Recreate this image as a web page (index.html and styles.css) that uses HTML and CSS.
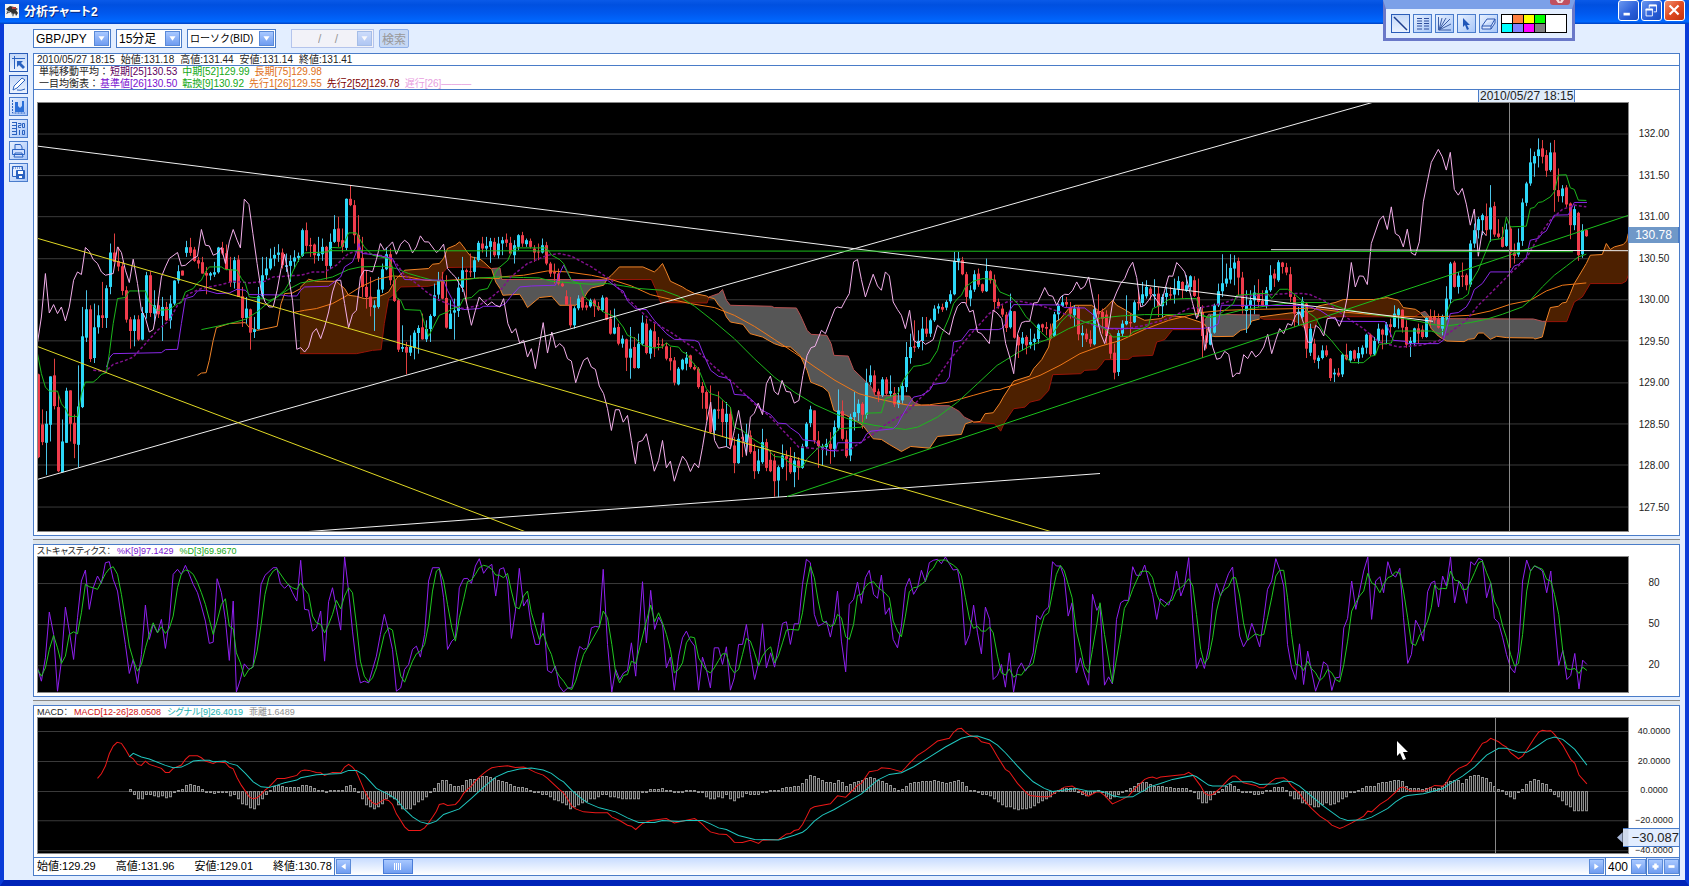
FILE: index.html
```html
<!DOCTYPE html>
<html lang="ja">
<head>
    <meta charset="UTF-8">
    <meta name="viewport" content="width=device-width, initial-scale=1.0">
    <title>分析チャート2</title>
    <link rel="stylesheet" href="styles.css">
</head>
<body>
    <header class="titlebar">
        <svg class="app-icon" viewBox="0 0 14 14"><rect width="14" height="14" fill="#f4f4f4"/><path d="M1 5 5 2l4 1 4 2-2 1 2 3-2 3-1-3-2 3-2-4-5 2 2-3z" fill="#333"/><path d="M7 3h4v2H7z" fill="#b43a3a"/><path d="M1 7h4l-1 2zM6 9l3 1-1 3z" fill="#8a98a0"/></svg>
        <h1>分析チャート2</h1>
        <div class="window-buttons">
            <button class="win-btn" aria-label="最小化"><svg viewBox="0 0 21 21"><path d="M5 13h7v3H5z" fill="#fff"/></svg></button>
            <button class="win-btn" aria-label="元に戻す"><svg viewBox="0 0 21 21" fill="none" stroke="#fff"><path d="M8 8V4.500h8V12h-3" /><path d="M8 5h8" stroke-width="2"/><path d="M4.500 9v7.500h7V9z"/><path d="M4 9.500h8" stroke-width="2"/></svg></button>
            <button class="win-btn win-close" aria-label="閉じる"><svg viewBox="0 0 21 21"><path d="M5 5l10 10M15 5 5 15" stroke="#fff" stroke-width="2.400"/></svg></button>
        </div>
    </header>

    <div class="palette">
        <button class="palette-close" aria-label="パレットを閉じる"><svg viewBox="0 0 20 5"><path d="M6 0h3l1 2 1-2h3l-2 3H8z" fill="#fff" opacity=".8"/></svg></button>
        <button class="tool active" aria-label="直線"><svg viewBox="0 0 17 17"><path d="m2 2 13 13" stroke="#1c3c8c" stroke-width="1.500"/></svg></button>
        <button class="tool" aria-label="フィボナッチ"><svg viewBox="0 0 17 17"><path d="M3 3.500h5M10 3.500h5M3 6h5M10 6h5M3 8.500h5M10 8.500h5M3 11h5M10 11h5M3 14h5M10 14h5" stroke="#2c4c9c"/></svg></button>
        <button class="tool" aria-label="ファン"><svg viewBox="0 0 17 17"><path d="M2.500 2v13H15M3 15 6 3M3 15l7-12M3 15 14 4M3 15l12-6" fill="none" stroke="#3c5ca4"/></svg></button>
        <button class="tool" aria-label="選択"><svg viewBox="0 0 17 17"><path d="M5 3v9l2-2 2 5 2-1-2-4h3z" fill="#1f55b8"/></svg></button>
        <button class="tool" aria-label="消しゴム"><svg viewBox="0 0 17 17"><path d="M2 11 7 4h8l-4 7zM2 11v3h9l4-6V4M11 11v3" fill="#dbe8ff" stroke="#2c56b0"/></svg></button>
        <div class="swatches">
            <button class="swatch white" aria-label="白"></button><button class="swatch orange" aria-label="橙"></button><button class="swatch yellow" aria-label="黄"></button><button class="swatch green" aria-label="緑"></button>
            <button class="swatch cyan" aria-label="水色"></button><button class="swatch violet" aria-label="紫"></button><button class="swatch magenta" aria-label="桃"></button><button class="swatch gray" aria-label="灰"></button>
        </div>
        <div class="current-color"></div>
    </div>

    <div class="window-body">
        <nav class="side-tools">
            <button class="tool active" aria-label="カーソル"><svg viewBox="0 0 17 17" fill="none" stroke="#2a62c0"><path d="M2 4.500h13M4.500 2v13"/><path d="M7 7h6l-2 2 4 4-2 2-4-4-2 2z" fill="#2a62c0" stroke="none"/></svg></button>
            <button class="tool active" aria-label="描画"><svg viewBox="0 0 17 17"><path d="m3 14 1-4 8-8 3 2-8 8z" fill="#fff" stroke="#2a62c0"/><path d="M7 14q4 1 8-1" stroke="#2a62c0" fill="none"/></svg></button>
            <button class="tool" aria-label="指標"><svg viewBox="0 0 17 17"><path d="M2.500 2v13H15" fill="none" stroke="#2a62c0" stroke-dasharray="2 1"/><path d="M5 4h3v4l2 2 2-2V3h2v11H5z" fill="#2a6fd8"/></svg></button>
            <button class="tool" aria-label="目盛"><svg viewBox="0 0 17 17" fill="none" stroke="#2a62c0"><path d="M2 2.500h4M2 5.500h4M2 8.500h4M2 11.500h4M2 14.500h4M6.500 2v13M8 3.500h3v2H8.500v2H11M12.500 3.500h2v4h-2zM9.500 10v5M12.500 10.500h2v4h-2z"/></svg></button>
            <button class="tool" aria-label="印刷"><svg viewBox="0 0 17 17" fill="#cfe0ff" stroke="#2a62c0"><path d="M5 8V2.500h5.500L12 5v3M2.500 7.500h12v5h-12zM5 11h7l1 4H4z"/></svg></button>
            <button class="tool" aria-label="保存"><svg viewBox="0 0 17 17" fill="#e6efff" stroke="#2a62c0"><path d="M2.500 2.500h10v10h-10z"/><path d="M3 4h9" stroke-dasharray="1 1"/><path d="M6.500 6.500h8v8h-8z" fill="#2a62c0"/><path d="M8 7h5v3H8zM9 12h3v2H9z" fill="#fff" stroke="none"/></svg></button>
        </nav>

        <main class="workspace">
            <form class="toolbar">
                <label class="combo pair"><select aria-label="通貨ペア"><option>GBP/JPY</option></select><svg class="arrow" viewBox="0 0 15 15"><path d="M4 5h7l-3.500 5z"/></svg></label>
                <label class="combo period"><select aria-label="足種"><option>15分足</option></select><svg class="arrow" viewBox="0 0 15 15"><path d="M4 5h7l-3.500 5z"/></svg></label>
                <label class="combo kind"><select aria-label="チャート種類"><option>ローソク(BID)</option></select><svg class="arrow" viewBox="0 0 15 15"><path d="M4 5h7l-3.500 5z"/></svg></label>
                <label class="combo date disabled"><input type="text" aria-label="日付" value="/    /" disabled><svg class="arrow" viewBox="0 0 15 15"><path d="M4 5h7l-3.500 5z"/></svg></label>
                <button class="search" type="button" disabled>検索</button>
            </form>

            <div class="charts">
                <section class="panel">
                    <div class="info quote"><span>2010/05/27 18:15</span><span>始値:131.18</span><span>高値:131.44</span><span>安値:131.14</span><span>終値:131.41</span></div>
                    <div class="info legend">
                        <div><span>単純移動平均：</span><span class="c-ma25">短期[25]130.53</span><span class="c-green">中期[52]129.99</span><span class="c-orange">長期[75]129.98</span></div>
                        <div><span>一目均衡表：</span><span class="c-kijun">基準値[26]130.50</span><span class="c-green">転換[9]130.92</span><span class="c-orange">先行1[26]129.55</span><span class="c-span-b">先行2[52]129.78</span><span class="c-chikou">遅行[26]―――</span></div>
                    </div>
                    <div class="date-strip"><span class="date-tag">2010/05/27 18:15</span></div>
                    <div class="plot-row">
                        <div class="plot"><svg id="price" viewBox="38 103 1590 427" preserveAspectRatio="none"></svg></div>
                        <ul class="axis price-axis">
                            <li>132.00</li><li>131.50</li><li>131.00</li><li>130.50</li><li>130.00</li><li>129.50</li><li>129.00</li><li>128.50</li><li>128.00</li><li>127.50</li>
                        </ul>
                        <span class="price-tag">130.78</span>
                    </div>
                </section>

                <div class="splitter"></div>

                <section class="panel">
                    <div class="sub-legend"><span>ストキャスティクス：</span><span class="c-kijun">%K[9]97.1429</span><span class="c-green">%D[3]69.9670</span></div>
                    <div class="plot-row">
                        <div class="plot"><svg id="stoch" viewBox="38 556 1590 135" preserveAspectRatio="none"></svg></div>
                        <ul class="axis stoch-axis"><li>80</li><li>50</li><li>20</li></ul>
                    </div>
                </section>

                <div class="splitter"></div>

                <section class="panel">
                    <div class="sub-legend"><span>MACD：</span><span class="c-macd">MACD[12-26]28.0508</span><span class="c-signal">シグナル[9]26.4019</span><span class="c-osci">乖離1.6489</span></div>
                    <div class="plot-row">
                        <div class="plot">
                            <svg id="macd" viewBox="38 717 1590 135" preserveAspectRatio="none"></svg>
                            <svg class="pointer" viewBox="0 0 11 19"><path d="M0 0v15l3-3 3 7 3-1-3-7h5z" fill="#fff"/></svg>
                        </div>
                        <ul class="axis macd-axis"><li>40.0000</li><li>20.0000</li><li>0.0000</li><li>−20.0000</li><li>−40.0000</li></ul>
                        <div class="level-tag"><svg viewBox="0 0 10 19"><path d="M10 0 0 9.500 10 19z"/></svg><span>−30.087</span></div>
                    </div>
                    <footer class="bottom-bar">
                        <div class="summary"><span>始値:129.29</span><span>高値:131.96</span><span>安値:129.01</span><span>終値:130.78</span></div>
                        <button class="step" aria-label="前へ"><svg viewBox="0 0 15 15"><path d="M10 4v7L5 7.500z"/></svg></button>
                        <input class="scroll" type="range" aria-label="表示位置" min="0" max="1000" value="26">
                        <button class="step" aria-label="次へ"><svg viewBox="0 0 15 15"><path d="M5 4v7l5-3.500z"/></svg></button>
                        <label class="count"><select aria-label="表示本数"><option>400</option></select><svg class="arrow" viewBox="0 0 15 15"><path d="M4 5h7l-3.500 5z"/></svg></label>
                        <button class="step" aria-label="拡大"><svg viewBox="0 0 15 15"><path d="M6 4h3v2h2v3H9v2H6V9H4V6h2z"/></svg></button>
                        <button class="step" aria-label="縮小"><svg viewBox="0 0 15 15"><path d="M4 6h7v3H4z"/></svg></button>
                    </footer>
                </section>
            </div>
        </main>
    </div>

    <script src="chart.js"></script>
</body>
</html>
```
FILE: styles.css
```css
* {
    margin: 0;
    padding: 0;
    box-sizing: border-box;
}

body {
    height: 100vh;
    display: flex;
    flex-direction: column;
    background: #e3eeff;
    color: #222;
    font-family: "Liberation Sans", "Noto Sans CJK JP", sans-serif;
    font-size: 12px;
    overflow: hidden;
}

button, select, input {
    font: inherit;
    color: inherit;
}

svg {
    display: block;
}

.titlebar {
    flex: none;
    height: 24px;
    display: flex;
    align-items: center;
    gap: 5px;
    padding: 0 4px 3px 5px;
    background: linear-gradient(#0a5ae8, #0050e0 20%, #0058ee 55%, #0068ff 90%, #0040c0);
}

.app-icon {
    width: 14px;
    height: 14px;
}

.titlebar h1 {
    flex: 1;
    font-size: 12px;
    color: #fff;
    font-feature-settings: "palt";
    text-shadow: 1px 1px 0 #0a2a80;
}

.window-buttons {
    display: flex;
    gap: 2px;
}

.win-btn {
    width: 21px;
    height: 21px;
    border: 1px solid #fff;
    border-radius: 3px;
    background: linear-gradient(135deg, #6b98f0, #2a5ed8 60%, #1a4cc0);
}

.win-close {
    background: linear-gradient(135deg, #f09070, #e04a20 50%, #c03410);
}

/* floating drawing palette */
.palette {
    position: absolute;
    top: 0;
    right: 114px;
    display: flex;
    gap: 3px;
    padding: 5px;
    background: #e3eeff;
    border: 3px solid #6a78c8;
    border-top: 9px solid #7ba0e8;
}

.palette-close {
    position: absolute;
    top: -9px;
    right: 2px;
    width: 20px;
    height: 5px;
    border: 0;
    border-radius: 0 0 3px 3px;
    background: #c05060;
}

.tool {
    width: 19px;
    height: 19px;
    border: 1px solid #4a7ccc;
    background: linear-gradient(135deg, #e6f0ff, #a8c6f8);
}

.tool.active {
    background: linear-gradient(#c4d8f8, #eaf2ff);
    border-color: #2a5cb8;
}

.swatches {
    display: grid;
    grid-template-columns: repeat(4, 10px);
    grid-template-rows: 1fr 1fr;
    gap: 1px;
    padding: 1px;
    background: #000;
}

.swatch { border: 0; }
.white { background: #fff; }
.orange { background: #ff8040; }
.yellow { background: #ff0; }
.green { background: #0f0; }
.cyan { background: #0ff; }
.violet { background: #8080ff; }
.magenta { background: #f0f; }
.gray { background: #808080; }

.current-color {
    width: 22px;
    margin-left: -4px;
    background: #fff;
    border: 1px solid #000;
}

.window-body {
    flex: 1;
    min-height: 0;
    display: flex;
    border: solid #0a3cd8;
    border-width: 0 4px 6px;
    border-bottom-color: #0024b8;
    padding: 0 5px 4px;
}

.side-tools {
    display: flex;
    flex-direction: column;
    gap: 3px;
    padding-top: 29px;
    width: 24px;
}

.workspace {
    flex: 1;
    min-width: 0;
    display: flex;
    flex-direction: column;
}

.toolbar {
    display: flex;
    gap: 5px;
    padding: 5px 0;
}

.combo {
    display: grid;
    height: 19px;
    background: #fff;
    border: 1px solid #4a7cc8;
}

.combo select, .combo input, .combo .arrow, .count select, .count .arrow {
    grid-area: 1 / 1;
}

.combo select, .combo input, .count select {
    appearance: none;
    width: 100%;
    min-width: 0;
    padding-left: 2px;
    border: 0;
    background: none;
    color: #000;
}

.combo.kind select {
    font-size: 10px;
}

.arrow, .step {
    width: 15px;
    height: 15px;
    border: 1px solid #5a8ad8;
    background: linear-gradient(#a8c8ff, #6f9cf0);
}

.arrow {
    justify-self: end;
    align-self: center;
    margin-right: 1px;
    pointer-events: none;
}

.arrow path, .step path {
    fill: #fff;
}

.pair { width: 78px; }
.period { width: 66px; }
.kind { width: 89px; }
.date { width: 83px; margin-left: 10px; }

.combo.disabled {
    border-color: #b4c4ec;
    background: #f2f2f8;
}

.combo.disabled .arrow {
    opacity: 0.5;
}

.combo.disabled input {
    padding-left: 26px;
    color: #999;
    white-space: pre;
}

.search {
    width: 30px;
    height: 19px;
    border: 1px solid #8fb0e8;
    border-radius: 2px;
    background: #c6d8f4;
    color: #999;
}

.charts {
    flex: 1;
    min-height: 0;
    display: grid;
    grid-template-rows: minmax(0, 482fr) 8px minmax(0, 153fr) 8px minmax(0, 171fr);
}

.panel {
    min-width: 0;
    display: flex;
    flex-direction: column;
    background: #fff;
    border: 1px solid #4a7cc8;
}

.splitter {
    background: linear-gradient(transparent 3px, #888 3px, #888 4px, #dde4ea 4px);
}

.info, .info div, .sub-legend {
    display: flex;
    gap: 6px;
    white-space: nowrap;
}

.info {
    font-size: 10px;
    line-height: 11px;
    padding-left: 3px;
    border-bottom: 1px solid #4a7cc8;
}

.info.legend {
    display: block;
    height: 24px;
    padding-left: 5px;
    line-height: 12px;
}

.info.legend div { gap: 5px; }
.info.legend div:last-child { line-height: 11px; }
.info.legend div span:first-child { margin-right: -4px; }

.sub-legend {
    height: 11px;
    padding-left: 3px;
    font-size: 9px;
    line-height: 12px;
    font-feature-settings: "palt";
}

.c-ma25 { color: #600060; }
.c-green { color: #14a814; }
.c-orange { color: #e07018; }
.c-kijun { color: #7a10d0; }
.c-span-b { color: #800000; }
.c-chikou { color: #e8a0e0; }
.c-macd { color: #d01010; }
.c-signal { color: #18b0b0; }
.c-osci { color: #909090; }

.date-strip {
    height: 12px;
    display: flex;
    justify-content: flex-end;
    padding-right: 104px;
}

.date-tag {
    width: 97px;
    line-height: 12px;
    padding-left: 1px;
    background: #e0ecfa;
    border: solid #4a7cc8;
    border-width: 0 1px;
    white-space: nowrap;
}

.plot-row {
    position: relative;
    flex: 1;
    min-height: 0;
    display: flex;
    padding: 0 0 3px 3px;
}

.plot {
    position: relative;
    flex: 1;
    min-width: 0;
    display: flex;
    background: #000;
    border: 1px solid #888;
}

.plot > svg:first-child {
    flex: 1;
    min-width: 0;
}

.axis {
    width: 50px;
    display: flex;
    flex-direction: column;
    justify-content: space-between;
    align-items: center;
    list-style: none;
    font-size: 10px;
    line-height: 12px;
}

.price-axis { padding-top: 26px; padding-bottom: 18px; }
.stoch-axis { padding-top: 21px; padding-bottom: 22px; }

.macd-axis {
    padding-top: 9px;
    margin-bottom: -2px;
    font-size: 9px;
    line-height: 11px;
}

.price-tag {
    position: absolute;
    top: 29%;
    right: 0;
    width: 51px;
    line-height: 16px;
    text-align: center;
    background: #6f98c8;
    border: solid #4a7cc8;
    border-width: 0 1px;
    color: #fff;
}

.level-tag {
    position: absolute;
    right: 0;
    bottom: 10px;
    width: 62px;
    height: 19px;
    display: flex;
    overflow: hidden;
}

.level-tag svg {
    width: 10px;
    fill: #a8b8d8;
}

.level-tag span {
    flex: 1;
    padding-left: 9px;
    font-size: 13px;
    line-height: 17px;
    background: rgba(224, 236, 255, 0.92);
    border: solid #4a7cc8;
    border-width: 1px 0;
}

.pointer {
    position: absolute;
    left: 85.5%;
    top: 17%;
    width: 11px;
    height: 19px;
}

.bottom-bar {
    flex: none;
    height: 18px;
    display: flex;
    align-items: center;
    gap: 1px;
    border-top: 1px solid #4a7cc8;
    background: linear-gradient(#c8dcff, #fff);
}

.summary {
    width: 301px;
    align-self: stretch;
    display: flex;
    gap: 20px;
    padding-left: 3px;
    background: #fff;
    border-right: 1px solid #4a7cc8;
    font-size: 11px;
    line-height: 17px;
    white-space: nowrap;
    color: #000;
}

.scroll {
    appearance: none;
    flex: 1;
    min-width: 0;
    height: 15px;
    background: none;
}

.scroll::-webkit-slider-thumb {
    appearance: none;
    width: 30px;
    height: 15px;
    border: 1px solid #4a7cd8;
    background: repeating-linear-gradient(90deg, #fff 0 1px, transparent 1px 2px) center / 8px 7px no-repeat, linear-gradient(#a8c8ff, #6f9cf0);
}

.count {
    width: 42px;
    align-self: stretch;
    display: grid;
    background: #fff;
    border: solid #4a7cc8;
    border-width: 0 1px;
}

.count .arrow {
    margin-right: 0;
}

/* chart strokes and fills */
#price *, #stoch *, #macd * {
    vector-effect: non-scaling-stroke;
    fill: none;
}

#price .grid, #stoch .grid, #macd .grid { stroke: #3a3a3a; }
.crosshair { stroke: #888; }
.t-white { stroke: #f0f0f0; }
.t-yellow { stroke: #e0d824; }
.t-green { stroke: #1cc01c; }
#price .cloud-up { fill: #4d2000; }
#price .cloud-down { fill: #565656; }
.span-a { stroke: #f08428; }
.span-b { stroke: #981408; }
.span-b-high { stroke: #b85050; }
.tenkan, .ma52 { stroke: #1cb81c; }
.ma75 { stroke: #f07818; }
.kijun { stroke: #8a28e8; }
.ma25 { stroke: #80108c; stroke-dasharray: 3 2; stroke-width: 1.5; }
.chikou { stroke: #f4b0ec; }
.wick-up { stroke: #4cc4e8; }
.wick-down { stroke: #e04040; }
#price .body-up { fill: #2cd8f8; }
#price .body-down { fill: #f03c4c; }
.k-line { stroke: #9020f0; }
.d-line { stroke: #20c820; }
.macd-line { stroke: #ec1818; }
.signal-line { stroke: #20c8c0; }
#macd .bar { stroke: #909090; fill: #202020; }
```
FILE: chart.js
```js
const NS = 'http://www.w3.org/2000/svg';

// Each tile maps recorded points to chart coordinates: left, top, horizontal units per pixel
// (vertical resolution is always a third of a pixel)
const TILES = {
    A: [0, 90, 2.8],
    B: [500, 220, 2.8],
    C: [1000, 190, 3],
    D: [1310, 120, 3],
    E: [0, 530, 2.8],
    F: [560, 540, 2.8],
    G: [1100, 530, 2.662]
};

const price = document.getElementById('price');
const stoch = document.getElementById('stoch');
const macd = document.getElementById('macd');

function add(svg, tag, cls, attrs) {
    const el = document.createElementNS(NS, tag);
    el.setAttribute('class', cls);
    for (const key in attrs) el.setAttribute(key, attrs[key]);
    svg.appendChild(el);
}

function line(svg, cls, x1, y1, x2, y2) {
    add(svg, 'line', cls, { x1, y1, x2, y2 });
}

function convert(parts) {
    return Object.entries(parts).map(([key, text]) => {
        const [left, top, unit] = TILES[key];
        return text.trim().split(/\s+/).map(p => {
            const [x, y] = p.split(',').map(Number);
            return (left + x / unit).toFixed(1) + ',' + (top + y / 3).toFixed(1);
        }).join(' ');
    }).join(' ');
}

function trace(svg, cls, parts) {
    add(svg, 'polyline', cls, { points: convert(parts) });
}

// Cloud between leading span A and leading span B
function cloud(cls, a, b) {
    const pa = convert(a).split(' ');
    const pb = convert(b).split(' ');
    add(price, 'polygon', cls, { points: pa.concat(pb.slice().reverse()).join(' ') });
    add(price, 'polyline', cls === 'cloud-up' ? 'span-b' : 'span-b-high', { points: pb.join(' ') });
    add(price, 'polyline', 'span-a', { points: pa.join(' ') });
}

// grids
[134, 175.5, 216.5, 258.5, 299.5, 340.5, 382.5, 423.5, 464.5, 506.5].forEach(y => line(price, 'grid', 38, y, 1628, y));
[582.5, 623.5, 664.5].forEach(y => line(stoch, 'grid', 38, y, 1628, y));
[730.5, 760.5, 790.5, 819.5, 849.5].forEach(y => line(macd, 'grid', 38, y, 1628, y));

cloud('cloud-up',
    { A: '840,592 864,567 886,573 942,573 954,585 965,595 976,615 998,618 1020,625 1054,622 1076,612 1088,605 1099,585 1110,565 1133,540 1200,535 1211,522 1230,520 1242,505 1253,475 1275,465 1287,455 1298,470 1309,487 1320,500 1342,505 1354,515 1377,538' },
    { A: '840,790 998,790 1020,785 1043,780 1067,778 1076,700 1088,625 1110,605 1122,590 1200,588 1230,580 1242,545 1253,532 1342,530 1377,535' });
cloud('cloud-down',
    { B: '-23,148 -12,185 0,205 8,225 55,222 66,240 77,262 110,232 145,228 167,255 212,255 234,235 245,215 256,203 290,195 301,175' },
    { B: '-23,145 0,143 5,178 280,178 301,175' });
cloud('cloud-up',
    { B: '301,175 312,165 334,140 400,140 432,155 443,145 455,130 466,155 477,183 511,200 522,208 545,220 578,227 585,232' },
    { B: '301,178 424,178 435,205 450,247 580,248 585,232' });
cloud('cloud-down',
    { B: '585,232 600,235 612,255 625,268 634,290 645,305 680,312 700,340 735,350 768,370 790,378 813,380 840,405 860,450 870,485 904,500 920,515 935,570 970,585 990,597 1016,615 1045,655 1068,657 1090,672 1124,693 1150,678 1203,683 1225,648 1292,642 1303,610 1325,603' },
    { B: '585,230 612,220 623,208 634,240 645,255 760,258 768,262 830,263 841,285 860,330 871,342 915,345 927,370 935,405 975,407 990,448 1016,475 1040,500 1050,525 1147,527 1158,545 1180,555 1258,556 1285,572 1300,590 1325,603' });
cloud('cloud-up',
    { B: '1325,605 1345,603 1358,580 1381,577', C: '0,638 10,620 41,572 89,557 101,535 125,508 146,470 158,400 182,385 206,355 225,345 275,345 300,365 318,352 338,330 350,345 374,358 398,373 434,390 482,385 500,375 554,380 600,395 614,402' },
    { B: '1325,605 1385,610', C: '2,722 14,695 41,655 75,650 90,635 120,628 146,600 158,553 242,550 254,540 290,538 302,525 314,508 386,507 398,498 458,495 470,455 494,448 518,418 600,418 614,405' });
cloud('cloud-down',
    { C: '614,402 635,437 645,439 700,438 722,420 743,415 755,392 779,386' },
    { C: '614,390 626,372 779,374' });
cloud('cloud-up',
    { D: '-151,590 -60,578 10,572 25,557 75,547 100,538 190,538 232,532 265,540 280,562 316,567 332,578' },
    { D: '-151,592 -139,597 -60,597 -40,605 -17,622 15,622 25,592 100,589 310,590 332,580' });
cloud('cloud-down',
    { D: '332,580 352,600 364,625 385,647 397,655 410,662 462,664 475,657 493,655 505,638 520,638 541,657 560,648 590,652 670,653 675,656 697,650 708,605' },
    { D: '332,578 345,573 355,585 364,595 670,596 697,603 708,603' });
cloud('cloud-up',
    { D: '708,603 721,562 745,558 757,548 769,546 781,520 793,490 805,470 829,430 841,405 877,403 889,370 901,388 913,380 940,373 950,362 955,340' },
    { D: '708,604 770,604 781,575 793,545 817,530 829,510 841,490 935,490 948,483 955,465' });
trace(price, 'span-a', { A: '553,856 564,848 577,847 586,810 597,750 606,712 642,700 687,697 698,712 720,720 753,713 776,708 787,640 797,610 819,608 842,595' });

// candles: direction, high, body top, body bottom, low
const candles = [
    ['A', 0, '-850 852 1100 1103|-957 1002 1055 1064|+962 1000 1057 1153|+858 858 1003 1053|-805 855 947 957|-912 950 1142 1145|+987 1053 1145 1145|+892 901 1057 1057|-900 900 1000 1053|-972 997 1060 1103|+825 948 1063 1130|+650 738 950 953|+600 657 742 755|-645 657 806 815|+640 711 803 818|+645 675 711 730|-575 675 683 713|+585 594 683 713|+460 487 590 612|-430 487 515 515|-470 513 529 543|-515 528 602 615|-588 600 688 697|-680 687 722 775|+675 687 722 768|-675 687 748 752|+650 668 748 750|+545 555 668 685|-543 555 668 680|+600 645 670 700|-620 645 672 683|+620 650 677 752|-635 650 690 692|+615 640 690 715|+570 571 640 645|+525 543 571 580|-541 541 556 556|+452 471 488 500|-443 471 488 497|-470 478 512 515|-500 510 520 535|-500 516 550 550|-530 548 556 612|+545 549 556 570|+515 546 553 560|+470 472 546 550|-455 473 490 495|-463 489 537 540|-500 537 577 590|+500 510 577 595|-495 508 620 620|-590 618 683 710|+620 655 683 700|-655 657 727 778|+680 717 725 743|+590 618 716 718|+500 555 618 622|+500 535 555 567|+475 505 535 540|+470 494 505 528|+462 487 494 515|-475 487 525 535|+490 525 530 545|+495 512 527 575|+480 502 514 535|+487 497 503 515|+415 420 497 500|-397 420 467 483|-443 464 468 500|-460 463 495 520|+440 490 497 512|+445 470 492 512|-467 470 527 568|+430 455 527 537|+375 417 455 458|-380 415 455 470|-415 450 470 487|+325 326 473 480|-285 326 345 348|-330 345 435 460|-375 434 505 515|-440 503 590 620|-540 590 620 655|-560 619 650 678|+630 645 652 722|+560 598 650 655|+520 537 598 608|+472 492 537 540|-475 492 570 585|-560 570 632 635|-625 630 778 785|+705 770 775 785|-755 770 787 852|+735 770 787 797|+720 727 773 807|+705 713 728 790|-670 711 747 748|+690 716 747 755|+672 677 716 755|+580 615 677 680|+545 570 613 632|-545 570 625 627|-555 623 712 715|+630 670 716 716|+625 660 667 748|+560 592 662 680|+500 540 592 605|-535 540 545 638|-490 543 546 560|+500 510 545 565|+452 458 510 515|-440 460 475 487|+440 467 475 500|+443 453 470 518|-443 455 495 500|+440 460 495 505'],
    ['B', 116, '+50 60 70 105|-40 58 68 80|-50 68 100 105|+60 75 105 130|+42 45 80 90|-35 45 70 80|+55 60 72 80|-55 62 80 85|-75 85 97 125|-70 94 97 120|+55 75 97 100|-65 75 130 135|-125 130 160 170|-130 155 160 190|-145 160 190 195|-185 190 198 200|-210 228 253 255|-230 253 315 322|+258 264 315 325|+225 235 264 270|-228 232 262 270|-245 255 262 270|+235 240 258 262|-235 240 258 290|-245 258 268 272|+225 232 270 275|-230 232 298 300|-270 295 340 343|+265 322 340 342|-310 320 370 375|+345 355 370 382|-355 357 412 452|+320 385 412 475|-350 380 443 445|+340 370 443 445|+285 307 370 375|-295 310 398 402|+325 330 400 415|-310 333 380 410|-350 370 374 390|-355 372 376 385|-368 378 415 420|-380 413 423 450|-410 420 487 495|+440 445 492 495|+415 418 447 450|+395 412 430 450|-403 405 440 445|-430 440 447 450|-440 445 500 505|-485 497 517 565|-510 515 565 600|-495 567 635 640|+565 567 630 640|-513 567 571 595|-540 565 605 650|+545 580 605 680|-560 580 675 680|-650 675 728 758|+640 655 728 730|-640 650 655 710|+610 640 665 700|-630 645 695 700|-670 692 752 775|+685 720 752 760|+625 665 725 730|-655 665 742 752|-690 718 752 755|-700 720 782 828|+735 740 780 830|+672 705 740 745|-690 707 715 780|-680 712 755 760|+695 720 755 800|-710 720 742 778|+670 678 742 745|+605 610 678 680|+556 567 608 620|-570 570 660 670|-632 660 677 742|+670 678 682 735|+655 670 680 705|-635 670 685 730|+600 620 685 710|+507 570 622 630|-540 572 655 660|-630 657 707 712|+580 590 705 722|+515 575 590 630|+537 550 578 602|-545 550 583 625|+445 487 583 595|+435 465 485 495|-450 465 515 525|-505 513 523 545|+470 477 525 530|-470 477 520 525|+465 512 520 530|-500 518 552 560|+500 540 552 563|+485 497 540 550|+365 410 500 515|+340 380 413 430|-300 378 382 395|+330 362 380 385|+290 325 362 390|-290 325 340 350|+295 300 340 350|+255 265 300 305|+250 258 265 280|-250 260 268 275|+240 245 262 270|+210 222 243 250|+95 122 222 225|+95 115 122 150|-110 120 162 165|-155 162 230 250|+195 210 235 258|+150 162 208 215|-145 160 193 200|-190 192 213 218|+115 152 213 215|-150 153 180 190|-163 178 245 275|-235 245 258 265'],
    ['C', 241, '-345 355 373 380|-365 373 413 425|+310 362 411 415|-362 363 442 445|-435 440 465 503|+425 442 460 480|-435 440 465 492|+415 455 463 475|+430 445 455 480|+400 403 446 460|-400 402 412 425|-395 410 415 435|-400 417 445 450|+365 372 437 440|+340 347 372 390|+315 336 347 350|-320 335 343 350|-335 350 370 385|+345 355 375 410|-345 352 432 450|+405 428 435 470|-415 430 447 455|-420 446 460 470|+345 357 462 465|-312 362 372 410|-355 365 385 430|-360 373 437 460|-430 435 490 505|-460 487 547 567|+420 428 545 557|+390 400 430 440|+315 392 402 405|-370 395 399 435|+330 336 396 398|-300 335 339 360|+275 312 338 345|+270 290 318 325|-290 295 312 330|+267 312 318 350|-290 310 348 380|+312 320 348 380|+290 308 320 345|-290 312 316 330|+265 297 313 340|+258 272 297 315|-273 275 300 325|+255 285 302 305|+255 258 290 300|-258 270 317 320|-265 320 367 380|-345 365 437 503|-415 435 457 475|+375 430 463 465|+340 345 427 430|+280 303 345 350|+192 279 303 320|+220 265 280 290|+192 233 268 280|+195 217 235 285|-202 212 262 315|-245 262 350 370|+300 345 362 428|+300 330 345 403|+285 307 330 372|-267 310 335 350|-300 332 345 350|+290 300 347 355|+225 255 300 305|-237 250 265 290|+210 216 270 275|-215 217 230 250|-218 231 247 255|-230 252 320 335|-310 320 370 410|+350 365 372 405|+320 333 380 385|-335 340 475 503|+400 415 487 497'],
    ['D', 319, '-655 670 718 728|+705 712 722 745|+675 690 713 717|-675 690 705 710|-713 715 773 782|+745 757 762 785|-743 757 765 770|+700 703 762 770|-670 703 717 720|+690 692 720 727|-688 690 715 722|+680 698 714 730|+675 682 702 712|+640 643 682 700|-640 643 702 707|+650 662 702 707|+610 625 662 670|-625 628 643 687|+605 612 645 670|-595 612 620 650|+555 580 620 622|+563 567 585 625|-567 568 622 637|-600 620 673 682|+650 662 670 710|+622 624 667 675|-610 624 640 670|-615 628 650 655|+590 593 650 652|-567 590 600 620|-570 588 600 610|-580 597 622 625|+583 590 625 645|+498 535 597 600|+425 430 537 550|-422 427 500 502|+455 466 500 520|-427 466 470 500|-460 465 495 510|+360 370 493 500|+310 330 370 383|+290 297 330 355|+280 285 300 345|-250 288 330 345|+195 262 328 365|-245 258 343 350|-297 340 350 355|-320 350 380 382|+310 328 377 380|-318 325 397 443|-370 397 407 430|+325 367 403 410|+235 247 362 377|+185 190 248 258|+85 127 190 197|+95 108 130 170|+55 88 108 142|-60 85 110 130|-90 105 152 170|+68 97 150 155|-60 97 210 275|-145 210 228 245|+195 205 228 247|-195 202 253 262|-247 250 315 357|+258 267 315 330|-275 278 405 422|+312 330 402 413|-327 330 348 350']
];

candles.forEach(([key, start, text]) => {
    const top = TILES[key][1];
    text.split('|').forEach((item, n) => {
        const dir = item[0] === '+' ? 'up' : 'down';
        const [high, bodyTop, bodyBottom, low] = item.slice(1).split(' ').map(v => top + v / 3);
        const x = 38.5 + (start + n) * 4;
        line(price, 'wick-' + dir, x, high, x, low);
        add(price, 'rect', 'body-' + dir, { x: x - 1.5, y: bodyTop, width: 3, height: Math.max(1, bodyBottom - bodyTop) });
    });
});

trace(price, 'ma75', {
    A: '820,667 853,660 886,655 931,640 965,620 1009,590 1054,568 1099,557 1144,560 1189,570 1230,572 1286,568 1342,563 1399,565',
    B: '0,170 66,165 133,152 189,155 256,165 312,178 368,197 421,223 477,237 533,250 601,262 656,285 712,318 768,357 824,397 882,440 938,480 1005,520 1057,535 1113,548 1147,555 1203,553 1258,545 1325,525 1381,508',
    C: '0,597 60,577 120,555 180,525 240,490 300,468 362,450 434,417 506,390 560,377 602,367 674,360 779,357 900,355',
    D: '0,563 100,575 208,585 330,590 421,588 481,585 541,572 601,552 661,540 709,512 757,495 829,488'
});
trace(price, 'ma52', {
    A: '564,718 608,708 653,697 687,687 720,665 742,645 776,620 808,597 842,578 898,568 931,560 976,538 1009,530 1076,528 1110,535 1144,550 1177,560 1211,570 1242,572 1286,570 1342,563 1399,560',
    B: '0,170 66,172 110,173 145,183 200,188 256,192 301,190 345,197 390,205 455,210 500,228 545,258 601,305 656,355 712,415 768,470 824,515 882,553 938,580 994,603 1050,615 1135,627 1169,620 1225,590 1281,545 1337,490 1392,435',
    C: '0,520 53,487 100,462 150,445 206,415 254,397 302,383 362,377 434,373 530,373 578,370 626,382 674,372 722,360 779,350 851,340 900,337',
    D: '0,547 48,547 100,565 148,575 208,585 268,593 328,603 364,612 409,617 481,607 529,597 577,582 637,560 661,540 697,500 733,465 769,438 805,410 829,402'
});
trace(price, 'ma25', {
    A: '261,840 295,843 317,822 351,810 373,800 407,760 441,720 474,690 497,645 530,610 564,595 620,583 653,573 698,578 742,573 765,560 808,557 842,555 876,545 909,545 942,525 965,500 976,490 998,483 1043,492 1088,500 1110,520 1133,555 1166,580 1200,610 1230,630 1265,645 1298,655 1342,645 1377,620',
    B: '5,205 30,170 77,130 133,105 167,100 200,108 256,140 312,180 357,235 421,300 477,335 545,385 601,440 656,490 712,550 757,590 801,640 837,680 893,685 938,692 983,685 1039,645 1083,610 1139,575 1203,505 1258,420 1315,345 1370,280 1401,255',
    C: '20,335 60,333 120,345 180,365 240,390 300,412 362,418 434,405 506,385 566,355 614,350 674,338 722,317 779,315 863,310 911,310',
    D: '0,523 50,545 100,585 160,625 208,665 268,680 330,675 385,662 421,635 469,600 505,555 541,520 601,460 649,415 685,350 721,300 757,268 793,255 829,260'
});
trace(price, 'kijun', {
    A: '298,830 308,800 317,790 452,787 463,778 497,777 508,700 519,625 541,618 553,602 575,600 608,610 642,608 664,597 687,600 698,613 787,614 808,617 831,617 842,600 853,590 920,588 942,570 954,560 965,530 987,515 1000,480 1005,460 1014,490 1043,493 1065,497 1099,505 1110,530 1122,550 1133,568 1242,570 1253,600 1265,625 1275,650 1298,658 1342,655 1354,648 1395,648',
    B: '0,258 15,250 33,225 55,200 88,197 155,195 167,160 178,135 190,160 200,180 256,182 301,180 334,207 345,212 357,242 379,265 410,268 432,300 466,340 488,357 545,360 556,365 567,395 590,450 612,468 634,473 645,482 656,522 690,525 712,545 735,570 757,582 779,608 801,610 813,622 837,640 848,658 882,662 893,675 920,690 940,690 945,667 1012,667 1027,640 1039,632 1101,625 1113,612 1124,590 1147,548 1158,530 1180,525 1203,510 1213,492 1247,487 1258,470 1270,365 1292,360 1315,328 1395,328',
    C: '5,415 17,400 29,360 41,343 182,344 194,352 254,353 278,372 302,408 320,414 602,415 640,410 655,400 664,345 900,346',
    D: '0,560 30,570 60,590 90,603 225,604 235,625 250,660 285,663 295,670 385,670 400,660 411,620 421,580 445,577 469,560 481,540 493,508 517,490 541,455 601,455 613,437 625,433 649,412 661,360 685,355 697,340 709,332 733,285 775,284 793,247 831,247'
});
trace(price, 'tenkan', {
    A: '105,790 116,850 127,890 138,902 161,902 172,940 183,955 194,978 217,978 228,910 239,875 261,875 273,865 284,852 298,847 306,790 317,700 329,625 351,622 362,602 407,602 418,635 441,660 474,658 497,640 508,637 519,605 530,600 541,595 553,578 564,570 575,545 586,530 620,530 631,538 664,540 676,565 687,580 698,620 742,625 753,632 776,620 797,600 808,580 819,545 831,520 842,500 853,488 920,485 931,472 954,473 965,455 976,428 998,428 1009,450 1020,470 1043,495 1065,500 1088,505 1099,530 1110,622 1122,630 1133,658 1177,660 1189,700 1200,738 1211,715 1230,675 1253,665 1265,655 1286,650 1298,625 1320,622 1342,600 1365,595 1377,570 1388,545 1399,530',
    B: '0,140 22,120 33,92 44,83 130,83 145,105 167,118 178,130 200,180 212,187 223,190 234,225 245,238 256,245 290,275 323,290 345,320 357,345 379,355 399,375 432,383 455,380 466,367 477,377 500,380 511,395 522,400 533,418 556,447 567,475 578,505 590,520 612,527 645,560 656,620 679,630 701,650 723,665 745,680 768,708 790,710 813,728 837,740 848,738 860,715 893,680 915,675 938,640 949,625 1012,620 1027,578 1068,577 1079,535 1110,522 1117,515 1124,490 1135,470 1158,438 1180,435 1203,427 1225,390 1236,345 1258,290 1270,250 1281,235 1292,225 1303,200 1325,183 1352,175 1381,178 1392,200',
    C: '0,305 29,317 53,340 77,378 101,402 122,425 146,447 158,430 182,395 206,372 230,385 254,395 278,400 302,408 320,420 338,440 386,438 398,425 434,412 446,405 458,355 482,345 506,328 554,325 590,325 602,372 626,382 650,378 674,360 700,340 710,315 779,310 803,310 815,325 839,297 863,297 887,315 905,330 923,365 947,383',
    D: '40,635 64,660 88,690 124,727 160,727 184,707 196,705 208,672 244,668 256,632 364,632 388,640 403,630 409,580 421,550 433,540 457,535 475,522 481,490 505,450 529,390 541,360 577,355 589,290 601,320 649,318 661,265 673,262 685,247 697,245 721,230 733,215 745,165 769,164 781,203 793,208 805,240 829,241'
});
trace(price, 'chikou', {
    A: '105,757 116,680 127,550 138,668 150,643 161,670 172,650 183,692 194,650 206,570 217,545 228,553 239,472 250,483 261,508 273,520 284,545 295,555 317,550 329,470 340,487 351,540 362,577 373,507 385,580 396,660 407,683 418,725 429,718 441,650 452,560 463,530 474,505 497,487 508,527 519,525 541,505 553,498 564,418 575,465 586,467 597,495 608,490 620,472 631,520 642,455 653,418 664,450 673,473 684,327 697,343 708,430 720,520 731,600 742,635 753,650 765,650 776,600 787,535 797,492 808,560 819,630 831,777 842,772 853,785 864,770 875,728 886,715 898,745 909,710 920,665 931,605 942,570 954,570 965,640 976,712 987,672 998,660 1009,560 1020,540 1032,541 1043,545 1054,508 1065,460 1076,480 1088,468 1099,455 1110,492 1122,462 1133,450 1144,460 1155,488 1166,470 1177,437 1189,455 1200,455 1222,487 1230,480 1242,462 1253,535 1265,550 1275,560 1286,580 1298,600 1309,650 1320,705 1331,660 1342,620 1354,635 1365,645 1377,635 1388,645',
    B: '0,260 10,235 22,310 33,338 44,325 55,368 66,360 77,410 88,385 99,445 110,375 121,307 133,398 145,335 156,382 167,370 178,380 189,415 200,422 212,487 223,450 234,420 245,412 256,440 267,447 278,497 290,520 301,565 312,630 323,568 334,568 345,605 357,585 368,660 379,730 387,665 399,660 410,640 421,695 432,752 444,720 455,660 466,742 477,722 488,782 500,740 511,707 522,722 533,753 545,728 556,742 567,680 578,610 590,545 601,660 612,683 634,678 645,685 656,630 668,570 679,640 690,705 701,590 712,578 723,548 735,583 746,490 757,467 768,513 779,523 790,480 801,513 813,515 824,548 837,540 848,465 860,405 871,382 882,378 900,330 911,340 927,295 938,265 945,260 956,263 967,240 978,220 990,125 1001,118 1012,178 1023,230 1034,195 1045,162 1057,197 1068,210 1079,155 1090,167 1101,245 1113,268 1124,285 1135,325 1147,270 1158,360 1169,368 1180,360 1191,372 1203,365 1213,358 1225,315 1236,325 1258,343 1270,290 1281,258 1292,247 1303,247 1315,275 1325,270 1337,335 1348,340 1370,370 1381,270 1392,278',
    C: '5,385 17,460 29,500 41,550 53,430 65,397 77,393 89,393 101,338 113,337 122,318 134,292 146,315 158,318 170,345 182,320 194,312 206,313 218,300 230,275 242,297 254,288 266,260 278,320 290,380 302,430 314,460 326,410 338,335 350,305 362,280 374,265 386,235 398,216 410,262 422,350 434,345 446,330 458,312 470,330 482,347 494,300 506,257 518,258 530,217 542,230 554,245 566,290 578,340 590,385 602,350 614,480 626,410 638,470 650,507 662,503 674,483 686,492 698,560 710,548 719,550 731,493 743,505 755,482 767,500 779,490 791,470 803,432 815,490 827,450 839,415 851,430 863,400 875,405 887,375 899,365 911,400 923,455 935,457 947,405 959,415 971,437',
    D: '52,595 76,592 88,618 100,590 112,530 124,427 136,500 148,467 160,468 172,493 184,370 208,300 220,287 232,328 244,260 256,340 268,348 280,380 292,327 304,398 316,405 328,365 340,245 352,185 364,127 385,88 397,110 409,150 421,97 433,208 445,225 457,205 469,252 481,315 493,267 505,408 517,332 529,347'
});

// hand-drawn trend lines
line(price, 't-white', 37, 146, 1433, 321);
line(price, 't-white', 37, 479, 1374, 102);
line(price, 't-white', 307, 531, 1100, 473);
line(price, 't-yellow', 37, 238, 1051, 531);
line(price, 't-yellow', 37, 346, 525, 531);
line(price, 't-green', 787, 496, 1629, 215);
line(price, 't-green', 328, 250.5, 1573, 251.5);
line(price, 't-white', 1271, 249.5, 1629, 250.5);
line(price, 'crosshair', 1509.5, 102, 1509.5, 531);

trace(stoch, 'k-line', {
    E: '105,410 116,450 127,380 138,243 150,310 161,480 172,390 183,228 194,300 206,385 217,260 228,150 239,117 250,235 261,170 273,135 284,157 295,95 306,92 317,145 329,180 340,260 351,340 362,427 373,385 385,457 396,370 407,222 418,325 429,280 441,305 452,265 463,352 474,270 485,130 497,115 508,130 519,103 530,130 541,160 553,185 564,225 575,270 586,337 597,333 608,143 620,185 631,265 642,388 653,210 662,482 673,445 684,398 697,415 708,408 720,290 731,160 742,133 753,122 765,110 775,110 785,158 797,172 808,160 819,185 831,210 842,88 853,235 864,237 875,300 886,290 898,240 909,390 920,212 931,170 942,230 954,297 965,78 976,180 987,300 998,400 1009,455 1020,450 1032,455 1043,415 1054,375 1065,310 1076,250 1088,300 1099,355 1110,480 1122,470 1133,415 1144,400 1155,355 1166,345 1177,378 1189,310 1200,150 1211,110 1230,110 1242,200 1253,355 1265,330 1275,320 1286,170 1298,143 1309,142 1320,157 1331,105 1342,83 1354,127 1365,110 1377,100 1388,195 1399,115 1410,110 1421,150 1432,322 1443,240 1454,112 1466,225 1477,205 1488,290 1499,340 1510,340 1521,245 1533,418 1544,425 1555,405 1566,465',
    F: '10,452 22,440 33,440 44,365 55,316 66,325 77,320 88,260 99,256 110,258 121,85 133,310 145,452 156,385 167,415 178,395 189,388 200,305 212,405 223,240 231,122 242,305 254,148 265,265 276,228 287,250 298,380 309,348 320,447 332,345 343,290 354,270 365,298 377,315 388,447 399,348 410,385 421,440 432,320 444,320 455,370 466,317 477,447 488,410 500,310 511,310 522,250 533,340 545,415 556,365 567,248 578,380 590,335 601,378 612,310 623,247 634,242 645,310 656,248 668,248 679,130 690,55 701,65 712,220 723,255 735,248 746,240 757,288 768,230 777,150 788,300 800,392 810,190 822,175 833,123 844,187 855,110 866,88 878,160 889,172 900,102 911,220 922,200 933,295 945,320 956,255 967,140 978,112 990,160 1001,140 1012,88 1023,122 1034,65 1045,58 1057,55 1068,68 1079,48 1090,68 1101,87 1113,85 1124,150 1135,312 1147,280 1158,192 1169,275 1180,338 1191,198 1203,235 1213,415 1225,402 1236,370 1247,438 1258,335 1270,452 1281,385 1292,365 1303,390 1315,370 1325,335 1335,223 1345,235 1356,210 1368,198 1379,62 1390,75 1401,75 1412,110 1423,225 1434,185 1446,395 1457,350 1468,395 1480,432 1491,160 1503,208',
    G: '0,220 12,462 23,437 33,458 44,265 55,215 65,208 76,208 87,107 97,133 108,133 119,102 129,148 140,190 151,265 161,203 172,212 183,222 193,190 204,120 215,195 225,165 236,80 247,270 257,412 268,380 278,412 289,350 300,215 310,157 321,195 332,160 342,128 353,108 361,210 372,315 382,347 393,325 404,277 414,308 425,347 436,260 446,175 457,150 468,83 478,115 489,165 499,340 510,410 521,445 531,338 542,460 553,360 563,420 574,480 585,445 595,392 606,402 617,478 627,440 638,438 649,290 659,262 670,150 681,235 691,180 702,120 713,78 723,265 734,150 745,137 755,185 766,92 777,130 787,138 798,112 808,260 819,397 829,370 840,267 851,290 861,330 872,182 882,155 891,150 901,228 912,135 922,165 933,78 944,215 955,150 965,160 976,217 987,92 997,102 1008,82 1018,87 1029,200 1040,155 1050,262 1061,275 1072,320 1082,370 1093,410 1104,425 1114,360 1125,150 1136,87 1146,120 1157,105 1168,112 1178,120 1189,185 1200,120 1210,270 1221,403 1232,358 1243,445 1253,433 1264,367 1275,473 1285,387 1296,400'
});
trace(stoch, 'd-line', {
    E: '105,415 116,435 127,410 138,355 150,313 161,350 172,397 183,375 194,310 206,302 217,308 228,245 239,160 250,167 261,170 273,175 284,152 295,128 306,113 317,107 329,130 340,190 351,265 362,345 373,385 385,420 396,400 407,350 418,310 429,275 441,305 452,287 463,307 474,292 485,255 497,170 508,128 519,117 530,120 541,130 553,155 564,185 575,220 586,265 597,310 608,270 620,220 631,203 642,285 653,293 662,365 673,395 684,437 697,415 708,408 720,360 731,280 742,190 753,140 765,120 775,113 797,147 808,162 819,170 831,175 842,155 853,175 864,190 875,255 886,275 898,280 909,305 920,280 931,250 942,208 954,233 965,195 976,170 987,185 998,280 1009,390 1020,435 1032,453 1043,440 1054,410 1065,360 1076,310 1088,290 1099,297 1110,365 1122,435 1133,453 1144,420 1155,390 1166,368 1177,360 1189,340 1200,280 1211,180 1222,120 1230,113 1242,150 1253,220 1265,290 1275,330 1286,260 1298,205 1309,152 1320,147 1331,130 1342,110 1354,103 1365,106 1377,115 1388,132 1399,133 1410,140 1421,127 1432,180 1443,228 1454,233 1466,195 1477,180 1488,245 1510,325 1521,307 1533,345 1544,370 1555,415 1566,435',
    F: '10,420 22,440 33,445 44,420 66,340 77,320 110,258 121,210 133,230 145,310 156,395 167,425 178,403 189,400 200,360 212,367 223,320 242,240 254,192 265,242 276,215 287,245 298,280 309,325 320,395 332,385 343,365 354,305 365,287 377,290 388,350 399,370 410,388 421,395 432,380 444,358 455,338 466,338 477,378 488,395 500,385 511,340 522,292 533,300 545,335 556,375 567,345 578,328 590,317 601,365 612,342 623,305 634,267 645,265 668,267 679,215 690,135 701,75 712,110 723,180 735,240 746,245 757,256 768,250 777,220 788,230 800,287 810,295 822,250 833,163 844,160 855,137 866,125 878,122 889,138 900,147 911,157 922,170 933,240 945,270 956,287 967,225 978,152 990,140 1001,138 1012,130 1023,120 1034,92 1045,82 1057,58 1079,57 1090,65 1101,72 1113,83 1124,105 1135,170 1147,235 1158,262 1169,255 1180,270 1191,270 1203,258 1213,275 1225,345 1236,395 1247,402 1258,383 1270,408 1281,400 1292,402 1303,385 1325,367 1335,310 1345,265 1356,225 1368,215 1379,155 1390,100 1401,73 1412,90 1423,130 1434,170 1446,270 1457,320 1468,375 1480,395 1491,325 1503,250',
    G: '0,215 12,310 33,455 55,310 65,232 76,210 87,175 97,150 108,122 119,120 129,122 140,140 151,190 161,215 172,227 183,212 193,207 204,178 215,170 225,160 236,143 247,165 257,250 268,355 278,397 289,380 300,320 310,240 321,190 332,175 342,167 353,140 361,140 372,195 382,275 393,328 404,317 414,308 425,313 436,310 446,260 457,200 468,135 478,118 489,118 499,200 510,310 521,400 531,402 542,418 553,390 563,412 574,425 585,448 595,438 606,415 617,425 627,445 638,452 649,400 659,330 670,240 681,215 691,195 702,180 713,127 723,155 734,163 745,185 755,160 766,140 777,135 787,122 798,127 808,180 819,260 829,337 840,343 851,312 861,300 872,270 882,230 891,162 901,175 912,172 922,173 933,120 944,147 955,150 965,175 976,175 987,150 997,125 1008,95 1018,90 1029,125 1040,155 1050,210 1061,235 1072,285 1082,320 1093,370 1104,405 1114,397 1125,310 1136,180 1146,120 1157,104 1168,110 1178,115 1189,145 1200,150 1210,190 1221,250 1232,360 1243,413 1253,415 1264,412 1275,427 1285,408 1296,418'
});
line(stoch, 'crosshair', 1509.5, 555, 1509.5, 692);

// MACD oscillator, first value belongs to bar 23
const oscillator = [
    6, -10, -22, -22, -10, -8, -12, -15, -12, -18, -15, -3, 3, 5, 18, 22, 18, 16, 6, -2, -3, -7, -3, -2, -3, -13, -10, -22, -35, -40, -48, -52, -40, -22, -8,
    4, 16, 18, 16, 12, 12, 12, 12, 18, 18, 14, 8, 4, 4, -4, 3, 4, 3, 2, 14, 18, 10, -2, -22, -38, -46, -52, -45, -35, -20, -16, -20, -38, -50, -52, -52, -40, -30, -25, -16, -4,
    10, 24, 34, 34, 20, 16, 14, 18, 34, 36, 36, 38, 44, 44, 42, 40, 34, 30, 26, 22, 14, 12, 12, 8, 4, -2, -4, -8, -8, -14, -24, -26,
    -32, -40, -50, -46, -38, -34, -30, -22, -20, -14, -8, -10, -14, -16, -18, -20, -20, -22, -20, -20, -3, -2, 6, 6, 6, 10, 4, 3, -4, -4, -2, 3, 4, 4, -2, -4, -14, -22, -20, -16, -18, -10, -20, -26,
    -18, -14, -6, -8, -10, -8, -2, -2, 4, 2, 2, 10, 12, 12, 14, 16, 24, 36, 48, 46, 38, 34, 28, 26, 24, 34, 28, 16, 22, 28, 30, 32, 38, 42, 38, 34, 30, 24, 18, 10, 4, 6, 14, 24, 28, 28,
    30, 30, 30, 34, 30, 28, 24, 26, 30, 34, 28, 14, 4, 3, -3, -8, -10, -12, -20, -30, -38, -45, -46, -52, -54, -52, -52, -48, -42, -32, -26, -20, -15, -6, 4, 8, 10, 10, 8, -2, -8, -12, -8, -2, 4,
    -3, -14, -22, -16, -8, -2, 4, 10, 16, 24, 26, 26, 22, 16, 14, 14, 12, 12, 10, 10, 8, 8, 3, -4, -20, -32, -32, -24, -10, -2, 6, 16, 20, 16, 6, -2, -4, -4, -8, -10, -6, 2, 3, 12, 12, 12, 3,
    -12, -20, -20, -34, -36, -38, -44, -44, -38, -34, -38, -36, -30, -20, -14, -4, -2, 2, 8, 16, 14, 16, 24, 26, 28, 30, 32, 34, 30, 16, 10, 8, 8, 6, 8, 12, 10, 8, 14, 28, 30, 34, 32, 24,
    36, 44, 48, 48, 42, 40, 28, 16, 5, 3, -8, -16, -20, -4, 5, 20, 30, 36, 32, 24, 20, 5, -8, -14, -26, -40, -44, -58, -58, -58, -58
];
oscillator.forEach((value, n) => {
    const height = Math.max(1, Math.round(Math.abs(value) / 3));
    const x = 38.5 + (23 + n) * 4 - 1;
    add(macd, 'rect', 'bar', { x, y: value > 0 ? 790.5 - height : 790.5, width: 2, height });
});

trace(macd, 'macd-line', {
    E: '273,742 284,728 295,705 306,668 317,645 328,634 340,637 351,655 362,675 373,683 385,700 396,703 407,690 418,700 452,712 463,724 474,724 485,712 508,702 519,685 530,674 553,674 564,680 575,690 597,697 608,692 631,695 642,708 653,713 664,740 676,763 687,780 698,797 709,803 720,800 731,790 742,777 753,768 776,742 797,742 808,739 831,733 842,720 853,717 865,718 886,724 898,725 909,733 931,724 954,725 965,708 976,700 987,708 998,722 1009,750 1020,778 1032,802 1043,815 1054,820 1065,812 1076,805 1088,808 1099,820 1110,848 1122,868 1133,887 1144,898 1177,898 1189,890 1200,875 1211,858 1222,840 1230,820 1242,817 1253,823 1275,820 1286,808 1298,787 1309,775 1320,765 1331,750 1342,738 1354,727 1365,718 1377,710 1399,706 1421,704 1443,709 1466,708 1477,712 1499,724 1521,732 1533,742 1566,775',
    F: '10,755 22,775 33,795 44,803 66,812 99,815 133,815 145,827 167,838 189,852 200,855 212,865 231,847 254,838 276,835 298,832 320,845 354,837 377,832 388,840 399,850 410,862 421,872 444,878 466,880 477,890 488,903 511,904 533,897 556,907 567,897 612,895 634,878 645,877 656,868 668,865 679,850 690,827 701,803 712,797 757,788 777,764 800,768 822,745 833,733 844,727 866,692 889,688 900,680 922,682 956,692 967,680 978,667 1001,643 1023,628 1045,610 1057,600 1090,592 1101,575 1113,564 1124,562 1135,573 1147,583 1169,590 1180,602 1203,608 1213,625 1225,647 1247,685 1258,692 1281,727 1303,752 1315,763 1345,767 1368,767 1390,752 1412,738 1434,735 1457,750 1480,765 1503,752',
    G: '0,783 12,793 33,818 55,807 76,795 87,780 97,768 119,745 129,740 140,738 151,742 161,738 225,730 236,724 247,732 257,748 268,765 278,785 289,792 300,790 321,770 342,745 353,735 361,735 382,755 414,763 425,770 436,770 457,750 468,742 489,740 499,748 510,765 531,787 542,805 563,832 585,855 606,870 617,882 638,892 649,887 670,875 691,862 702,855 713,840 723,842 745,820 766,805 787,783 798,770 808,768 819,775 829,780 861,780 891,763 912,765 922,755 933,733 955,712 976,702 987,690 997,673 1018,637 1029,632 1040,622 1061,632 1072,642 1082,648 1093,665 1114,683 1125,675 1136,657 1157,620 1168,603 1178,598 1189,600 1200,599 1210,610 1232,643 1253,685 1264,697 1275,732 1296,758'
});
trace(macd, 'signal-line', {
    E: '362,677 373,667 396,678 418,684 463,703 485,710 508,708 530,697 541,690 564,688 586,688 597,692 631,690 642,697 664,703 687,727 709,752 731,767 753,769 776,762 797,755 831,747 842,740 886,731 954,727 976,718 998,718 1020,732 1054,772 1088,790 1110,805 1133,835 1155,857 1177,872 1200,878 1222,870 1242,850 1286,833 1320,802 1354,768 1388,738 1421,722 1454,714 1488,711 1521,717 1544,727 1566,745',
    F: '10,722 33,748 55,768 77,785 110,800 156,812 189,830 220,844 265,844 287,838 332,841 354,838 399,838 421,848 444,860 466,865 500,883 545,895 612,896 656,882 679,873 690,865 712,840 735,822 768,805 800,785 844,758 866,738 889,717 922,700 956,695 990,677 1034,648 1079,618 1101,605 1124,592 1147,586 1169,585 1203,597 1225,612 1247,635 1281,675 1303,700 1325,722 1356,742 1379,751 1401,748 1446,742 1480,750',
    G: '0,780 12,783 33,793 55,798 87,797 108,783 119,778 129,768 161,757 193,745 247,733 257,737 289,762 300,765 332,765 353,752 404,752 425,760 468,758 489,750 510,752 531,765 563,795 595,825 638,860 659,868 702,866 723,858 766,832 787,812 808,797 819,793 861,788 912,773 933,757 965,735 997,708 1029,672 1061,652 1082,652 1114,664 1136,664 1157,650 1189,625 1210,618 1232,625 1264,655 1296,702'
});
line(macd, 'crosshair', 1495.5, 716, 1495.5, 853);
```
